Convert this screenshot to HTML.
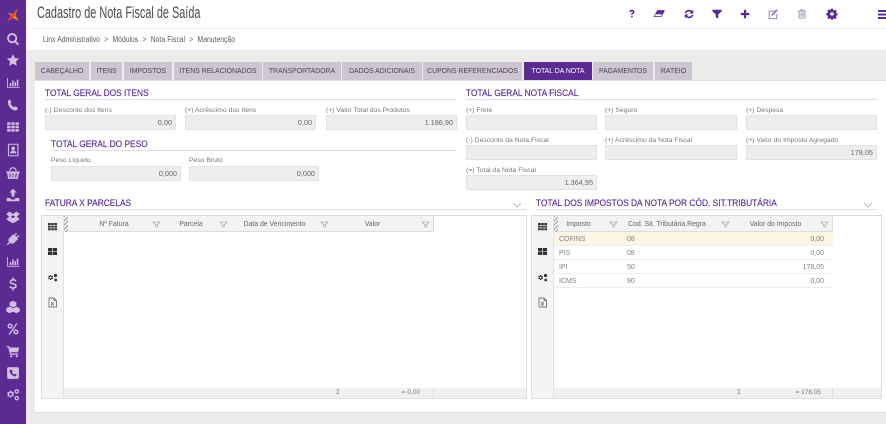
<!DOCTYPE html>
<html><head><meta charset="utf-8">
<style>
*{box-sizing:border-box}
html,body{margin:0;padding:0}
body{width:886px;height:424px;overflow:hidden;position:relative;background:#ebebeb;font-family:"Liberation Sans",sans-serif}
.a{position:absolute}
.side{left:0;top:0;width:26px;height:424px;background:#5b2b91}
.side svg{position:absolute;left:4px;width:18px;height:18px;fill:#d0bfe2;stroke:none;transform:scale(.84)}
.top svg{position:absolute;top:6px;width:16px;height:16px;fill:#5b2b91;transform:scale(.85)}
.tab{position:absolute;top:62px;height:18px;background:#cec5d3;color:#4a4550;font-size:6.9px;line-height:19px;text-align:center;white-space:nowrap}
.tab.on{background:#5b2b91;color:#fff}
.h{position:absolute;color:#5f3695;font-size:9.3px;white-space:nowrap;line-height:12px;transform:scaleX(.9);transform-origin:0 0;-webkit-text-stroke:.2px #5f3695}
.l{position:absolute;height:1px;background:#e3d9ec}
.lb{position:absolute;color:#777;font-size:6.8px;line-height:9px;white-space:nowrap}
.f{position:absolute;height:15px;width:131px;background:#eee;border:1px solid #e2e2e2;color:#666;font-size:7.3px;line-height:14px;text-align:right;padding-right:3px}
.g{position:absolute;border:1px solid #ddd;background:#fff}
.tb{position:absolute;left:0;top:0;bottom:0;width:22px;background:#f4f4f4;border-right:1px solid #e2e2e2}
.tb svg{position:absolute;left:5px;width:11px;height:11px;fill:#333}
.th{position:absolute;top:0;height:16px;background:#f3f3f3;border-right:1px solid #ddd;border-bottom:1px solid #ddd;color:#666;font-size:6.9px;line-height:17px;text-align:center;white-space:nowrap}
.th i{position:absolute;right:4px;top:6px;width:7px;height:5px}
.ft{position:absolute;height:10px;bottom:0;background:#f0f0f0;border-right:1px solid #ddd;color:#777;font-size:6.5px;line-height:10px;white-space:nowrap}
.r{position:absolute;height:14px;border-bottom:1px solid #eee;color:#808080;font-size:7px;line-height:15px}
.r span{position:absolute;top:0}
</style></head>
<body>
<svg width="0" height="0" style="position:absolute"><defs>
<path id="ftr" d="M0 0H7L4.2 3V5L2.8 4.300V3Z" fill="none" stroke="#999" stroke-width=".6"/>
<g id="grid"><path d="M1 2h2.700v2H1zM4.200 2h2.600v2H4.200zM7.300 2h2.700v2H7.300zM1 4.600h2.700v2H1zM4.200 4.600h2.600v2H4.200zM7.300 4.600h2.700v2H7.300zM1 7.200h2.700v2H1zM4.200 7.200h2.600v2H4.200zM7.300 7.200h2.700v2H7.300z"/></g>
<g id="cards"><path d="M1 2h4.200v3.200H1zM5.800 2H10v3.200H5.800zM1 5.800h4.200V9H1zM5.800 5.800H10V9H5.800z"/></g>
<g id="cogs"><path fill-rule="evenodd" d="M4 3l.5 1 1-.2.500.9-.7.800.7.800-.5.900-1-.2-.5 1H3l-.3-1-1 .2-.500-.9.700-.800-.7-.800.5-.9 1 .2L3 3zM3.500 4.500a1 1 0 1 0 .01 0z"/><circle cx="8.500" cy="3.500" r="1.600"/><circle cx="8.700" cy="8" r="1.400"/></g>
<g id="xls"><path fill="none" stroke="#555" stroke-width=".7" d="M2 1h5l2.500 2.500V10H2zM7 1v2.500h2.500"/><path fill="none" stroke="#555" stroke-width=".7" d="M4.200 5l2.500 3.500M6.700 5L4.200 8.500"/></g>
</defs></svg>

<!-- sidebar -->
<div class="a side">
<svg style="top:6px;transform:none" viewBox="0 0 18 18"><path fill="#f7941d" d="M13.500 2.500L8.500 8 3.500 6.500 7 9.800 3 15.500 9 12l6.500 3-4.300-5z"/><path fill="#e8372c" d="M13.500 2.500L8.500 8 7 9.800 3 15.500 9 12z"/></svg>
<svg style="top:30px" viewBox="0 0 18 18"><path fill-rule="evenodd" d="M8 2a6 6 0 0 1 4.800 9.500l3.500 3.500-1.600 1.600-3.500-3.500A6 6 0 1 1 8 2zm0 2.200a3.800 3.800 0 1 0 .01 0z"/></svg>
<svg style="top:51px" viewBox="0 0 18 18"><path d="M9 2l2.200 4.600 5 .7-3.600 3.500.9 5L9 13.400l-4.500 2.400.9-5L1.800 7.300l5-.7z"/></svg>
<svg style="top:74px" viewBox="0 0 18 18"><path d="M2 3h1v11h14v1H2zM5 9h2v4H5zM8 6h1.800v7H8zM10.800 8h1.800v5h-1.800zM13.500 5h1.800v8h-1.800z"/></svg>
<svg style="top:96px" viewBox="0 0 18 18"><path d="M5 2.500l2.200 3.200-1.300 1.500c.8 1.800 2.500 3.600 4.300 4.500l1.500-1.400 3.300 2.300c-.3 1.700-1.600 2.900-3 2.900C7 15.500 2.600 10 3 5c.1-1.300.9-2.200 2-2.500z"/></svg>
<svg style="top:118px" viewBox="0 0 18 18"><path d="M2 3.500h4v3H2zM7 3.500h4v3H7zM12 3.500h4v3h-4zM2 7.500h4v3H2zM7 7.500h4v3H7zM12 7.500h4v3h-4zM2 11.500h4v3H2zM7 11.500h4v3H7zM12 11.500h4v3h-4z"/></svg>
<svg style="top:141px" viewBox="0 0 18 18"><path fill-rule="evenodd" d="M3 1.500h12.500v15H3zM4.300 2.800v12.400h9.900V2.800z"/><circle cx="9.200" cy="7" r="2.200"/><path d="M5.500 13c0-2 1.500-3.300 3.700-3.300S13 11 13 13z"/></svg>
<svg style="top:164px" viewBox="0 0 18 18"><path fill-rule="evenodd" d="M1 7h16v2h-1l-1.200 7H3.200L2 9H1zM4.500 9.500l.6 4.500h1.200l-.4-4.500zM8.400 9.500V14h1.200V9.500zM12.100 9.500l-.4 4.500h1.200l.6-4.500zM4.500 6.400C5 3.500 6.800 2.200 9 2.200s4 1.300 4.500 4.200h-1.400C11.700 4.500 10.500 3.500 9 3.500S6.300 4.500 5.900 6.400z"/></svg>
<svg style="top:186px" viewBox="0 0 18 18"><path d="M9 1.500l4.500 4.500h-2.700v5H7.200V6H4.500zM1.500 12.500h4.700v1c0 .5.400.8.800.8h4c.4 0 .8-.3.800-.8v-1h4.700v4h-15z"/></svg>
<svg style="top:208px" viewBox="0 0 18 18"><path d="M5 2.500L9 5.500 13 2.500 17 5.500 13.500 8.500 17 11.500 13.500 14 9 16.500 4.500 14 1 11.500 4.500 8.500 1 5.500zM9 7L6.500 8.500 9 10.500 11.500 8.500z" fill-rule="evenodd"/></svg>
<svg style="top:230px" viewBox="0 0 18 18"><path d="M12.500 1.500l1.300 1.300-2.300 2.300 1.400 1.400 2.300-2.300 1.300 1.300-2.300 2.300 1 1-4.500 4.500c-1.500 1.500-3.500 1.500-5 .5L2.500 16.500 1.500 15.500l2.700-2.700c-1-1-1-3.500.5-5L9.200 3.300l1 1z"/></svg>
<svg style="top:253px" viewBox="0 0 18 18"><path d="M2 3h1v11h14v1H2zM5 9h2v4H5zM8 6h1.800v7H8zM10.800 8h1.800v5h-1.800zM13.500 5h1.800v8h-1.800z"/></svg>
<svg style="top:275px" viewBox="0 0 18 18"><path d="M8.300 1h1.500v2c1.600.2 2.800.9 3.400 1.800L12 6.200c-.7-.8-1.700-1.200-3-1.200-1.400 0-2.200.5-2.200 1.300s.7 1.100 2.700 1.600c2.700.7 4 1.600 4 3.500 0 1.800-1.400 3-3.700 3.300V17H8.300v-2.300c-1.700-.2-3.100-1-3.900-2.100l1.300-1.400c.8 1 1.900 1.600 3.400 1.600 1.500 0 2.400-.6 2.400-1.400 0-.9-.7-1.200-2.800-1.800C6.200 9 5 8.200 5 6.400c0-1.700 1.300-2.900 3.300-3.300z"/></svg>
<svg style="top:298px" viewBox="0 0 18 18"><path fill-rule="evenodd" d="M9 1.500l4 2v4l-4 2-4-2v-4zM5 8.500l4 2v4l-4 2-4-2v-4zM13 8.500l4 2v4l-4 2-4-2v-4z"/></svg>
<svg style="top:320px" viewBox="0 0 18 18"><path fill-rule="evenodd" d="M5.500 2.500a3 3 0 1 1-.01 0zM5.500 4.200a1.300 1.300 0 1 0 .01 0zM12.500 9.500a3 3 0 1 1-.01 0zM12.500 11.200a1.300 1.300 0 1 0 .01 0zM12.600 2.500h1.900L5.400 15.500H3.500z"/></svg>
<svg style="top:342px" viewBox="0 0 18 18"><path d="M1.500 3h3l.5 1.800h11.500L15 10.500H6.500l.3 1.500h8.200v1.500H5.500L3.300 4.500H1.500z"/><circle cx="7" cy="15.200" r="1.300"/><circle cx="13.500" cy="15.200" r="1.300"/></svg>
<svg style="top:364px" viewBox="0 0 18 18"><path fill-rule="evenodd" d="M4 2h10a2 2 0 0 1 2 2v10a2 2 0 0 1-2 2H4a2 2 0 0 1-2-2V4a2 2 0 0 1 2-2zM6.500 4.500L5 6c0 3.500 3.500 7 7 7l1.500-1.500-2.300-1.800-1.200 1c-1-.5-1.800-1.400-2.300-2.300l1-1.200z"/></svg>
<svg style="top:386px" viewBox="0 0 18 18"><path fill-rule="evenodd" d="M7 4l.7 1.500 1.600-.4.900 1.500-1.100 1.200 1.100 1.200-.9 1.500-1.600-.4L7 12H5.200l-.6-1.500-1.600.4-.9-1.500L3.200 8.200 2.100 7l.9-1.500 1.600.4L5.200 4zM6.100 6.500a1.700 1.700 0 1 0 .01 0z"/><path fill-rule="evenodd" d="M13.500 2a2.700 2.700 0 1 1-.01 0zM13.500 3.600a1.100 1.100 0 1 0 .01 0zM13.500 10a2.700 2.700 0 1 1-.01 0zM13.500 11.600a1.100 1.100 0 1 0 .01 0z"/></svg>
</div>

<!-- header -->
<div class="a top" style="left:26px;top:0;width:860px;height:50px;background:#fff">
<div class="a" style="left:0;right:0;top:28px;height:1px;background:#f2f2f2"></div>
<div class="a" style="left:11px;top:3px;font-size:16.500px;line-height:20px;color:#4f4a4a;white-space:nowrap;transform:scaleX(.66);transform-origin:0 0">Cadastro de Nota Fiscal de Saída</div>
<div class="a" style="left:16.500px;top:34px;font-size:8px;line-height:11px;color:#5a5a5a;white-space:nowrap;transform:scaleX(.85);transform-origin:0 0;word-spacing:.3px">Linx Administrativo &nbsp;&gt;&nbsp; Módulos &nbsp;&gt;&nbsp; Nota Fiscal &nbsp;&gt;&nbsp; Manutenção</div>
<svg style="left:598px" viewBox="0 0 16 16"><path d="M5 5.500C5 3.800 6.200 3 8 3s3 .9 3 2.400c0 1.300-.8 1.800-1.500 2.300-.5.300-.7.600-.7 1.200H7c0-1.100.3-1.700 1-2.200.6-.4.900-.7.900-1.200 0-.5-.4-.8-.9-.8-.6 0-1 .4-1 1zM7 10h1.900v2H7z"/></svg>
<svg style="left:625px" viewBox="0 0 16 16"><path d="M6 3.500h9L11 11.500H1.500z" fill-rule="evenodd"/><path d="M4 8.500h7.500l-1 2.200H3.200z" fill="#fff"/></svg>
<svg style="left:655px" viewBox="0 0 16 16"><path d="M8 3c1.500 0 2.800.6 3.700 1.500L13 3v4.500H8.500l1.800-1.700C9.700 5.200 8.900 5 8 5 6.500 5 5.300 5.900 4.900 7H2.800C3.300 4.700 5.400 3 8 3zM3 8.500h4.500l-1.800 1.700c.6.600 1.400.8 2.300.8 1.500 0 2.700-.9 3.100-2h2.100c-.5 2.300-2.600 4-5.200 4-1.500 0-2.800-.6-3.700-1.500L3 13z"/></svg>
<svg style="left:683px" viewBox="0 0 16 16"><path d="M2.500 3h11v1.800L9.500 8.500V13.500L6.500 12V8.500L2.500 4.800z"/></svg>
<svg style="left:711px" viewBox="0 0 16 16"><path d="M6.700 3h2.600v3.700H13v2.600H9.300V13H6.700V9.300H3V6.700h3.700z"/></svg>
<svg style="left:739px" viewBox="0 0 16 16"><path fill="#8b70ab" fill-rule="evenodd" d="M3 4h7l-1 1H4v8h8V8.500l1-1V14H3z"/><path fill="#8b70ab" d="M12 2.500l1.500 1.500-5.500 5.500-2 .5.500-2z"/></svg>
<svg style="left:768px" viewBox="0 0 16 16"><path fill="#a99bc0" fill-rule="evenodd" d="M6 2.500h4V4h3v1.200h-1V13.500H4V5.200H3V4h3zM5.300 5.200v7.200h5.400V5.200zM6.300 6.300h.9v5h-.9zM7.600 6.300h.9v5h-.9zM8.900 6.300h.9v5h-.9z"/></svg>
<svg style="left:798px;transform:scale(.72)" viewBox="0 0 16 16"><path fill-rule="evenodd" d="M6.700 1.500h2.600l.4 1.900 1.300.6 1.700-1 1.800 1.800-1 1.700.6 1.300 1.900.4v2.600l-1.900.4-.6 1.300 1 1.700-1.800 1.800-1.700-1-1.300.6-.4 1.900H6.700l-.4-1.900-1.300-.6-1.700 1-1.800-1.800 1-1.700-.6-1.300-1.900-.4V7.700l1.900-.4.600-1.300-1-1.700L3.300 2.500l1.700 1 1.300-.6zM8 6.500a2.500 2.500 0 1 0 .01 0z" transform="translate(0 -1)"/></svg>
<div class="a" style="left:852px;top:10px;width:8px;height:2px;background:#5b2b91;box-shadow:0 3.500px 0 #5b2b91,0 7px 0 #5b2b91"></div>
</div>

<!-- panel -->
<div class="a" style="left:35px;top:80px;width:851px;height:333px;background:#fff;border-top:1px solid #e3d9ec;border-bottom:1px solid #ddd"></div>

<div class="tab" style="left:35px;width:54px">CABEÇALHO</div>
<div class="tab" style="left:91px;width:31px">ITENS</div>
<div class="tab" style="left:124px;width:48px">IMPOSTOS</div>
<div class="tab" style="left:174px;width:88px">ITENS RELACIONADOS</div>
<div class="tab" style="left:263px;width:78px">TRANSPORTADORA</div>
<div class="tab" style="left:342px;width:80px">DADOS ADICIONAIS</div>
<div class="tab" style="left:423px;width:99px">CUPONS REFERENCIADOS</div>
<div class="tab on" style="left:524px;width:68px">TOTAL DA NOTA</div>
<div class="tab" style="left:593px;width:60px">PAGAMENTOS</div>
<div class="tab" style="left:655px;width:37px">RATEIO</div>

<div class="h" style="left:45px;top:87px">TOTAL GERAL DOS ITENS</div>
<div class="l" style="left:45px;top:99px;width:412px"></div>
<div class="lb" style="left:45px;top:106px">(-) Desconto dos Itens</div>
<div class="f" style="left:45px;top:115px">0,00</div>
<div class="lb" style="left:185px;top:106px">(+) Acréscimo dos Itens</div>
<div class="f" style="left:185px;top:115px">0,00</div>
<div class="lb" style="left:326px;top:106px">(+) Valor Total dos Produtos</div>
<div class="f" style="left:326px;top:115px">1.186,90</div>

<div class="h" style="left:51px;top:138px">TOTAL GERAL DO PESO</div>
<div class="l" style="left:51px;top:150px;width:406px"></div>
<div class="lb" style="left:51px;top:156px">Peso Líquido</div>
<div class="f" style="left:51px;top:166px;width:130px">0,000</div>
<div class="lb" style="left:189px;top:156px">Peso Bruto</div>
<div class="f" style="left:189px;top:166px;width:130px">0,000</div>

<div class="h" style="left:466px;top:87px">TOTAL GERAL NOTA FISCAL</div>
<div class="l" style="left:466px;top:99px;width:411px"></div>
<div class="lb" style="left:466px;top:106px">(+) Frete</div>
<div class="f" style="left:466px;top:115px"></div>
<div class="lb" style="left:605px;top:106px">(+) Seguro</div>
<div class="f" style="left:605px;top:115px;width:132px"></div>
<div class="lb" style="left:746px;top:106px">(+) Despesa</div>
<div class="f" style="left:746px;top:115px"></div>
<div class="lb" style="left:466px;top:136px">(-) Desconto da Nota Fiscal</div>
<div class="f" style="left:466px;top:145px"></div>
<div class="lb" style="left:605px;top:136px">(+) Acréscimo da Nota Fiscal</div>
<div class="f" style="left:605px;top:145px;width:132px"></div>
<div class="lb" style="left:746px;top:136px">(+) Valor do Imposto Agregado</div>
<div class="f" style="left:746px;top:145px">178,05</div>
<div class="lb" style="left:466px;top:166px">(=) Total da Nota Fiscal</div>
<div class="f" style="left:466px;top:175px">1.364,95</div>

<div class="h" style="left:45px;top:197px">FATURA X PARCELAS</div>
<div class="l" style="left:45px;top:209px;width:482px"></div>
<svg class="a" style="left:512px;top:202px" width="10" height="6" viewBox="0 0 10 6"><path d="M1 1l4 4 4-4" fill="none" stroke="#aaa" stroke-width=".8"/></svg>
<div class="h" style="left:536px;top:197px">TOTAL DOS IMPOSTOS DA NOTA POR CÓD. SIT.TRIBUTÁRIA</div>
<div class="l" style="left:536px;top:209px;width:341px"></div>
<svg class="a" style="left:863px;top:202px" width="10" height="6" viewBox="0 0 10 6"><path d="M1 1l4 4 4-4" fill="none" stroke="#aaa" stroke-width=".8"/></svg>

<!-- left grid -->
<div class="g" style="left:41px;top:215px;width:486px;height:184px">
  <div class="tb">
    <svg style="top:5px" viewBox="0 0 11 11"><use href="#grid"/></svg>
    <svg style="top:30px" viewBox="0 0 11 11"><use href="#cards"/></svg>
    <svg style="top:56px" viewBox="0 0 11 11"><use href="#cogs"/></svg>
    <svg style="top:81px" viewBox="0 0 11 11"><use href="#xls"/></svg>
  </div>
  <div class="th" style="left:22px;width:101px">Nº Fatura<i><svg width="7" height="5" viewBox="0 0 7 5" style="display:block;overflow:visible"><use href="#ftr"/></svg></i></div>
  <div class="th" style="left:122px;width:68px;padding-right:13px">Parcela<i><svg width="7" height="5" viewBox="0 0 7 5" style="display:block;overflow:visible"><use href="#ftr"/></svg></i></div>
  <div class="th" style="left:189px;width:102px;padding-right:14px">Data de Vencimento<i><svg width="7" height="5" viewBox="0 0 7 5" style="display:block;overflow:visible"><use href="#ftr"/></svg></i></div>
  <div class="th" style="left:290px;width:102px;padding-right:20px">Valor<i><svg width="7" height="5" viewBox="0 0 7 5" style="display:block;overflow:visible"><use href="#ftr"/></svg></i></div>
  <div class="a" style="left:22px;top:0;width:4px;height:16px;background:repeating-linear-gradient(135deg,#999 0 1px,#f3f3f3 1px 3px)"></div>
  <div class="ft" style="left:22px;right:0;border:0"></div>
  <div class="ft" style="left:22px;width:101px"></div>
  <div class="ft" style="left:122px;width:68px"></div>
  <div class="ft" style="left:189px;width:102px"></div>
  <div class="ft" style="left:290px;width:102px;padding:0 12px 0 4px">Σ<span style="position:absolute;right:13px">= 0,00</span></div>
</div>

<!-- right grid -->
<div class="g" style="left:531px;top:215px;width:351px;height:184px">
  <div class="tb">
    <svg style="top:5px" viewBox="0 0 11 11"><use href="#grid"/></svg>
    <svg style="top:30px" viewBox="0 0 11 11"><use href="#cards"/></svg>
    <svg style="top:56px" viewBox="0 0 11 11"><use href="#cogs"/></svg>
    <svg style="top:81px" viewBox="0 0 11 11"><use href="#xls"/></svg>
  </div>
  <div class="th" style="left:22px;width:68px;padding-right:18px">Imposto<i><svg width="7" height="5" viewBox="0 0 7 5" style="display:block;overflow:visible"><use href="#ftr"/></svg></i></div>
  <div class="th" style="left:89px;width:113px;padding-right:20px">Cod. Sit. Tributária Regra<i><svg width="7" height="5" viewBox="0 0 7 5" style="display:block;overflow:visible"><use href="#ftr"/></svg></i></div>
  <div class="th" style="left:201px;width:100px;padding-right:14px">Valor do Imposto<i><svg width="7" height="5" viewBox="0 0 7 5" style="display:block;overflow:visible"><use href="#ftr"/></svg></i></div>
  <div class="a" style="left:22px;top:0;width:4px;height:16px;background:repeating-linear-gradient(135deg,#999 0 1px,#f3f3f3 1px 3px)"></div>
  <div class="r" style="left:22px;top:16px;width:279px;background:#fdf5e3"><span style="left:5px">COFINS</span><span style="left:73px">08</span><span style="right:9px">0,00</span></div>
  <div class="r" style="left:22px;top:30px;width:279px"><span style="left:5px">PIS</span><span style="left:73px">08</span><span style="right:9px">0,00</span></div>
  <div class="r" style="left:22px;top:44px;width:279px"><span style="left:5px">IPI</span><span style="left:73px">50</span><span style="right:9px">178,05</span></div>
  <div class="r" style="left:22px;top:58px;width:279px"><span style="left:5px">ICMS</span><span style="left:73px">90</span><span style="right:9px">0,00</span></div>
  <div class="ft" style="left:22px;right:0;border:0"></div>
  <div class="ft" style="left:22px;width:68px"></div>
  <div class="ft" style="left:89px;width:113px"></div>
  <div class="ft" style="left:201px;width:100px;padding:0 0 0 4px">Σ<span style="position:absolute;right:11px">= 178,05</span></div>
</div>
</body></html>
